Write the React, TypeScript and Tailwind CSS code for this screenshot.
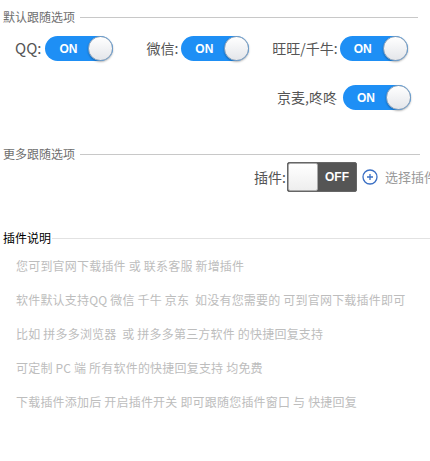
import React from "react";

const font = { fontFamily: '"Microsoft YaHei", "Noto Sans CJK SC", "Noto Sans", sans-serif' };

function On() {
  return (
    <div className="relative flex h-[25px] w-[68px] shrink-0 items-center rounded-full bg-[#1e8ff5]">
      <span className="ml-[14px] text-[12px] font-bold leading-none text-white" style={{ fontFamily: '"Liberation Sans", Arial, sans-serif' }}>ON</span>
      <span className="absolute right-0 top-0 h-[25px] w-[25px] rounded-full border border-[#8aa0b8] bg-gradient-to-b from-white to-[#e4e6ea] shadow-[0_1px_2px_rgba(0,0,0,0.3)]" />
    </div>
  );
}

function Off() {
  return (
    <div className="flex h-[30px] w-[70px] shrink-0 overflow-hidden rounded-[2px] border border-[#666] bg-[#555]">
      <span className="h-full w-[30px] rounded-[2px] border border-[#aaa] bg-gradient-to-b from-white to-[#eee]" />
      <span className="flex flex-1 items-center justify-center text-[12px] font-bold text-white" style={{ fontFamily: '"Liberation Sans", Arial, sans-serif' }}>OFF</span>
    </div>
  );
}

function Legend({ title, dark, lineEnd }: { title: string; dark?: boolean; lineEnd: string }) {
  return (
    <div className={`flex items-center ${lineEnd}`}>
      <span className={`text-[12px] leading-none ${dark ? "text-black" : "text-[#6f6f6f]"}`}>{title}</span>
      <span className={`h-px flex-1 ${dark ? "ml-[1px] bg-[#e2e2e2]" : "ml-[5px] bg-[#c8c8c8]"}`} />
    </div>
  );
}

const tips = [
  "您可到官网下载插件 或 联系客服 新增插件",
  "软件默认支持QQ 微信 千牛 京东  如没有您需要的 可到官网下载插件即可",
  "比如 拼多多浏览器  或 拼多多第三方软件 的快捷回复支持",
  "可定制 PC 端 所有软件的快捷回复支持 均免费",
  "下载插件添加后 开启插件开关 即可跟随您插件窗口 与 快捷回复",
];

export default function App() {
  return (
    <div className="h-[461px] w-[430px] overflow-hidden bg-white pl-[3px] pt-[11px]" style={font}>
      <Legend title="默认跟随选项" lineEnd="mr-[12px]" />

      <div className="mt-[13px] flex items-center text-[#555]">
        <span className="ml-[12px] mr-[4px] text-[15px]">QQ:</span>
        <On />
        <span className="ml-[33px] mr-[3px] text-[14px]">微信:</span>
        <On />
        <span className="ml-[23px] mr-[2px] text-[14px]">旺旺/千牛:</span>
        <On />
      </div>

      <div className="mt-[24px] flex items-center justify-end pr-[19px] text-[#555]">
        <span className="mr-[6px] text-[14px]">京麦,咚咚</span>
        <On />
      </div>

      <div className="mt-[38px]">
        <Legend title="更多跟随选项" lineEnd="mr-[10px]" />
      </div>

      <div className="mt-[2px] flex items-center justify-end whitespace-nowrap text-[#555]">
        <span className="mr-px text-[14px]">插件:</span>
        <Off />
        <svg className="ml-[5px] shrink-0" width="16" height="16" viewBox="0 0 16 16">
          <circle cx="8" cy="8" r="7" fill="none" stroke="#3a6fc4" strokeWidth="1.3" />
          <path d="M8 5v6M5 8h6" stroke="#3a6fc4" strokeWidth="1.3" />
        </svg>
        <span className="ml-[7px] w-[45px] overflow-hidden text-[13px] text-[#999]">选择插件</span>
      </div>

      <div className="mt-[40px]">
        <Legend title="插件说明" dark lineEnd="" />
      </div>

      <div className="ml-[13px] mt-[14px] flex flex-col gap-[18px]">
        {tips.map((t, i) => (
          <div key={i} className="whitespace-pre text-[12px] leading-[16px] tracking-[0.2px] text-[#bdbdbd]">{t}</div>
        ))}
      </div>
    </div>
  );
}
